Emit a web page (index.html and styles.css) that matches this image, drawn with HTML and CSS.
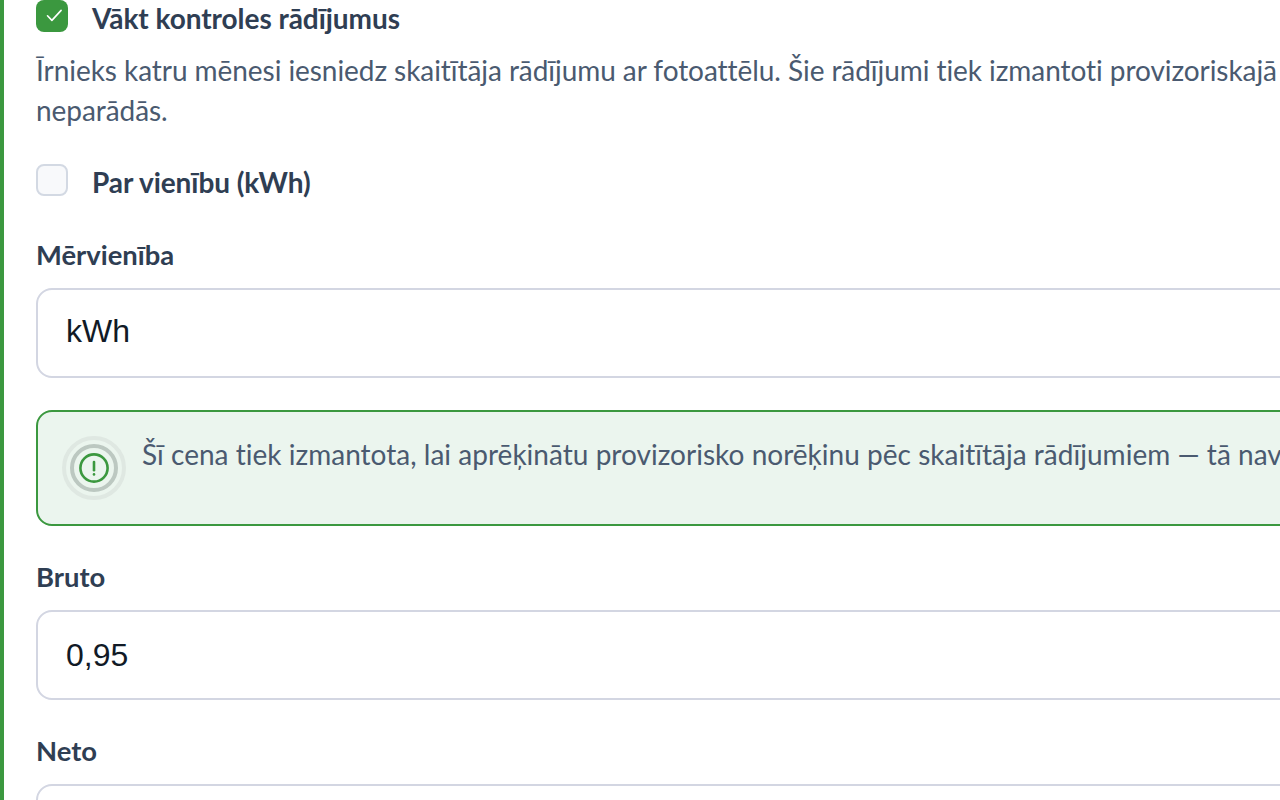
FILE: index.html
```html
<!DOCTYPE html>
<html lang="en">
<head>
    <meta charset="UTF-8">
    <meta name="viewport" content="width=device-width, initial-scale=1.0">
    <title>Kontroles rādījumi</title>
    <link rel="stylesheet" href="styles.css">
</head>
<body>

    <div class="panel">
        <!-- Readings toggle -->
        <label class="check-row">
            <span class="checkbox checked">
                <svg viewBox="0 0 32 32" width="32" height="32" fill="none" stroke="#fff" stroke-width="1.6" stroke-linecap="round" stroke-linejoin="round"><path d="M11.5 15.8l4.4 4.6 9.2-10"/></svg>
            </span>
            <span class="check-label">Vākt kontroles rādījumus</span>
        </label>

        <p class="hint">Īrnieks katru mēnesi iesniedz skaitītāja rādījumu ar fotoattēlu. Šie rādījumi tiek izmantoti provizoriskajā<br>neparādās.</p>

        <label class="check-row second">
            <span class="checkbox"></span>
            <span class="check-label">Par vienību (kWh)</span>
        </label>

        <div class="field unit">
            <div class="field-label">Mērvienība</div>
            <div class="input">kWh</div>
        </div>

        <!-- Price notice -->
        <div class="notice">
            <span class="notice-icon">
                <span class="ring-outer">
                    <span class="ring-inner">
                        <svg viewBox="0 0 32 32" width="32" height="32" fill="none" stroke="#3b983f" stroke-width="2.6" stroke-linecap="round"><circle cx="16" cy="16" r="13.6"/><path d="M16 10v8.2"/><path d="M16 22.4v.1"/></svg>
                    </span>
                </span>
            </span>
            <span class="notice-text">Šī cena tiek izmantota, lai aprēķinātu provizorisko norēķinu pēc skaitītāja rādījumiem — tā nav</span>
        </div>

        <div class="field">
            <div class="field-label">Bruto</div>
            <div class="input">0,95</div>
        </div>

        <div class="field">
            <div class="field-label">Neto</div>
            <div class="input"></div>
        </div>
    </div>

</body>
</html>
```

FILE: styles.css
```css
html, body {
    height: 100%;
}

body {
    font-family: 'Lato', sans-serif;
    margin: 0;
    padding: 0;
    background-color: #fff;
    color: #334155;
    overflow: hidden;
}

.panel {
    width: 1600px;
    height: 800px;
    box-sizing: border-box;
    border-left: 4px solid #3b983f;
    padding-left: 32px;
    overflow: hidden;
}

.check-row {
    display: flex;
    align-items: flex-start;
    gap: 24px;
}

.check-row.second {
    margin-top: 34px;
}

.checkbox {
    flex: none;
    width: 32px;
    height: 32px;
    box-sizing: border-box;
    border: 2px solid #d3d9e3;
    border-radius: 8px;
    background: #f8f9fb;
    display: flex;
    align-items: center;
    justify-content: center;
}

.checkbox.checked {
    background: #3b983f;
    border: 0;
}

.check-label {
    font-size: 28px;
    font-weight: 700;
    line-height: 36px;
    letter-spacing: -0.05px;
    color: #2f3e53;
}

.hint {
    margin: 14px 0 0;
    font-size: 28px;
    line-height: 40px;
    letter-spacing: -0.06px;
    color: #4a5a70;
}

.field {
    margin-top: 35px;
}

.field.unit {
    margin-top: 39px;
}

.field-label {
    font-size: 27.4px;
    font-weight: 700;
    line-height: 32px;
    color: #2f3e53;
    margin-bottom: 17px;
}

.input {
    height: 90px;
    box-sizing: border-box;
    border: 2px solid #d3d6e2;
    border-radius: 16px;
    padding: 0 28px;
    display: flex;
    align-items: center;
    font-family: 'Liberation Sans', sans-serif;
    font-size: 32px;
    color: #111a26;
}

.unit .input {
    padding-bottom: 4px;
}

.notice {
    margin-top: 32px;
    height: 116px;
    box-sizing: border-box;
    border: 2px solid #3b983f;
    border-radius: 16px;
    background: #ebf5ee;
    padding: 24px 24px 0;
    display: flex;
    align-items: flex-start;
    gap: 16px;
}

.notice-icon {
    flex: none;
}

.ring-outer {
    width: 64px;
    height: 64px;
    box-sizing: border-box;
    border: 4px solid #dfe8e2;
    border-radius: 50%;
    display: flex;
    align-items: center;
    justify-content: center;
}

.ring-inner {
    width: 48px;
    height: 48px;
    box-sizing: border-box;
    border: 4px solid #bcc8c1;
    border-radius: 50%;
    display: flex;
    align-items: center;
    justify-content: center;
}

.notice-text {
    font-size: 28px;
    line-height: 36px;
    letter-spacing: 0.02px;
    color: #4a5a70;
    white-space: nowrap;
}
```
